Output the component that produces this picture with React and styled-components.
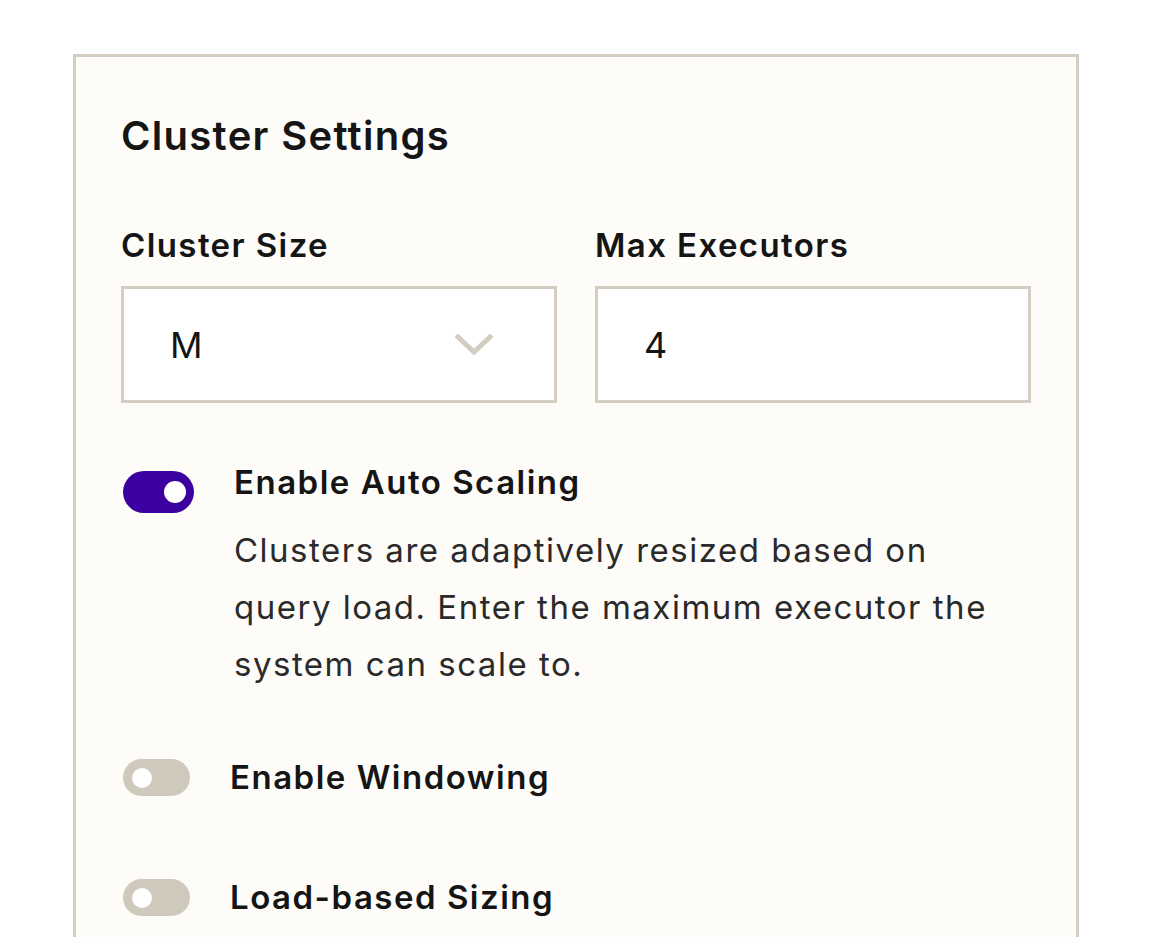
import React, { useState } from 'react'
import styled, { createGlobalStyle } from 'styled-components'

const GlobalStyle = createGlobalStyle`
  html, body {
    margin: 0;
    padding: 0;
    background: #ffffff;
    font-family: Inter, "Noto Sans", sans-serif;
    color: #151515;
  }
`

function Chevron() {
  return (
    <svg width="38" height="22" viewBox="0 0 38 22" fill="none">
      <path d="M3 3 L19 18 L35 3" stroke="#d3cdc0" strokeWidth="5" strokeLinecap="square" />
    </svg>
  )
}

function App() {
  let [size] = useState('M')
  let [executors, setExecutors] = useState('4')
  let [toggles, setToggles] = useState({ auto: true, windowing: false, load: false })

  const flip = (key) => setToggles((prev) => ({ ...prev, [key]: !prev[key] }))

  return (
    <Page>
      <GlobalStyle />
      <Panel>
        <Title>Cluster Settings</Title>
        <Fields>
          <Field>
            <Label>Cluster Size</Label>
            <Box>
              <Value>{size}</Value>
              <Chevron />
            </Box>
          </Field>
          <Field>
            <Label>Max Executors</Label>
            <Box>
              <Input value={executors} onChange={(e) => setExecutors(e.target.value)} />
            </Box>
          </Field>
        </Fields>

        <ToggleRow $space={59}>
          <Switch $on={toggles.auto} $big onClick={() => flip('auto')}>
            <Knob $on={toggles.auto} $big />
          </Switch>
          <ToggleText>
            <ToggleLabel>Enable Auto Scaling</ToggleLabel>
            <Description>
              Clusters are adaptively resized based on query load. Enter the maximum executor the
              system can scale to.
            </Description>
          </ToggleText>
        </ToggleRow>

        <ToggleRow $space={64}>
          <Switch $on={toggles.windowing} onClick={() => flip('windowing')}>
            <Knob $on={toggles.windowing} />
          </Switch>
          <ToggleText>
            <ToggleLabel>Enable Windowing</ToggleLabel>
          </ToggleText>
        </ToggleRow>

        <ToggleRow $space={80}>
          <Switch $on={toggles.load} onClick={() => flip('load')}>
            <Knob $on={toggles.load} />
          </Switch>
          <ToggleText>
            <ToggleLabel>Load-based Sizing</ToggleLabel>
          </ToggleText>
        </ToggleRow>
      </Panel>
    </Page>
  )
}

export default App

let Page = styled.div`
  width: 1173px;
  height: 937px;
  overflow: hidden;
  padding: 54px 0 0 73px;
  box-sizing: border-box;
`

let Panel = styled.section`
  width: 1006px;
  min-height: 1000px;
  box-sizing: border-box;
  border: 3px solid #d4cec2;
  background: #fdfcf9;
  padding: 55px 45px 0 45px;
`

let Title = styled.h2`
  margin: 0;
  font-size: 40px;
  line-height: 48px;
  font-weight: 600;
  letter-spacing: 1.3px;
  color: #151515;
`

let Fields = styled.div`
  display: grid;
  grid-template-columns: 1fr 1fr;
  column-gap: 38px;
  margin-top: 65px;
`

let Field = styled.div`
  display: flex;
  flex-direction: column;
  gap: 21px;
`

let Label = styled.label`
  font-size: 33px;
  line-height: 40px;
  font-weight: 600;
  letter-spacing: 1.4px;
  color: #151515;
`

let Box = styled.div`
  height: 117px;
  box-sizing: border-box;
  border: 3px solid #d4cec2;
  background: #ffffff;
  display: flex;
  align-items: center;
  justify-content: space-between;
  padding: 0 61px 0 46px;
`

let Value = styled.span`
  font-size: 36px;
  color: #151515;
`

let Input = styled.input`
  border: none;
  outline: none;
  background: transparent;
  width: 100%;
  padding: 0;
  font-family: inherit;
  font-size: 36px;
  color: #151515;
`

let ToggleRow = styled.div`
  display: flex;
  align-items: flex-start;
  gap: 40px;
  margin-top: ${(p) => p.$space}px;
`

let Switch = styled.button`
  flex: none;
  position: relative;
  border: none;
  padding: 0;
  cursor: pointer;
  width: ${(p) => (p.$big ? '71px' : '67px')};
  height: ${(p) => (p.$big ? '42px' : '37px')};
  margin: ${(p) => (p.$big ? '9px 0 0 2px' : '2px 0 0 2px')};
  border-radius: 30px;
  background: ${(p) => (p.$on ? '#3c00a0' : '#cfc9bc')};
`

let Knob = styled.span`
  position: absolute;
  top: 50%;
  transform: translateY(-50%);
  width: ${(p) => (p.$big ? '22px' : '20px')};
  height: ${(p) => (p.$big ? '22px' : '20px')};
  border-radius: 50%;
  background: #ffffff;
  ${(p) => (p.$on ? 'right: 8px;' : 'left: 9px;')}
`

let ToggleText = styled.div`
  display: flex;
  flex-direction: column;
  gap: 20px;
`

let ToggleLabel = styled.div`
  font-size: 33px;
  line-height: 40px;
  font-weight: 600;
  letter-spacing: 1.5px;
  color: #151515;
`

let Description = styled.p`
  margin: 0;
  width: 770px;
  font-size: 33px;
  line-height: 57px;
  letter-spacing: 1.5px;
  color: #2a2a2a;
`
